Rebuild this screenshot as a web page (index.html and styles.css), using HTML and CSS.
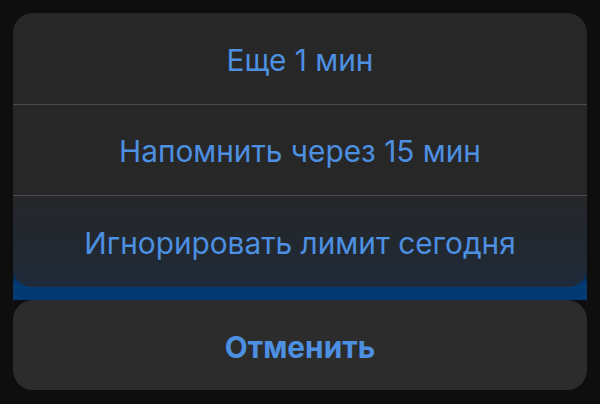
FILE: index.html
```html
<!DOCTYPE html>
<html lang="ru">
<head>
<meta charset="utf-8">
<link rel="stylesheet" href="styles.css">
</head>
<body>
<div class="screen">
  <div class="group">
    <div class="card">
      <div class="row">Еще 1 мин</div>
      <div class="row">Напомнить через 15 мин</div>
      <div class="row last">Игнорировать лимит сегодня</div>
    </div>
  </div>
  <div class="cancel">Отменить</div>
</div>
</body>
</html>
```
FILE: styles.css
```css
html, body {
  margin: 0;
  padding: 0;
  background: #0e0e0e;
}
.screen {
  width: 600px;
  height: 404px;
  box-sizing: border-box;
  padding: 13px 13px 0 13px;
  display: flex;
  flex-direction: column;
  font-family: Inter, Roboto, "Noto Sans", sans-serif;
}
.group {
  background: linear-gradient(to bottom, rgba(0,58,117,0) 0, rgba(0,58,117,0) 250px, #033a74 272px, #033a74 100%);
  border-radius: 20px 20px 0 0;
  padding-bottom: 13px;
}
.card {
  background: #272727;
  border-radius: 20px;
  overflow: hidden;
}
.row {
  height: 91px;
  display: flex;
  align-items: center;
  justify-content: center;
  color: #4d8fe0;
  font-size: 29.8px;
  border-top: 1px solid #4a4a4a;
  padding-top: 2px;
  box-sizing: border-box;
}
.row:first-child {
  border-top: none;
  height: 91px;
}
.row.last {
  height: 92px;
  background: linear-gradient(to bottom, #25272a 0%, #222830 55%, #1e2a3a 100%);
}
.cancel {
  margin-top: 0;
  height: 90px;
  background: #2c2c2c;
  border-radius: 20px;
  display: flex;
  align-items: center;
  justify-content: center;
  color: #4d8fe0;
  font-size: 29.8px;
  font-weight: 700;
  padding-top: 3px;
  box-sizing: border-box;
}
```
